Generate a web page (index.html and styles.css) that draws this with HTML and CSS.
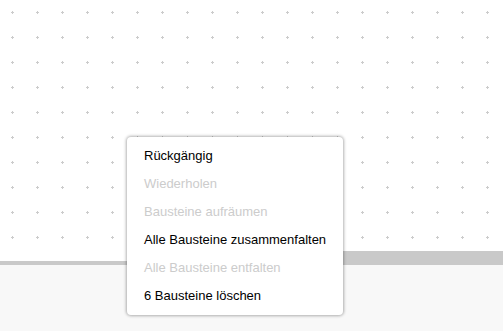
FILE: index.html
```html
<!DOCTYPE html>
<html lang="de">

<head>
    <meta charset="UTF-8">
    <meta name="viewport" content="width=device-width, initial-scale=1.0">
    <title>Blockly Arbeitsbereich</title>
    <link rel="stylesheet" href="styles.css">
</head>

<body>
    <div class="workspace">
        <svg class="workspace__grid" width="100%" height="251" xmlns="http://www.w3.org/2000/svg">
            <defs>
                <pattern id="gridPattern" width="25" height="25" patternUnits="userSpaceOnUse">
                    <line x1="11" y1="12.5" x2="14" y2="12.5" stroke="#ccc" stroke-width="1"></line>
                    <line x1="12.5" y1="11" x2="12.5" y2="14" stroke="#ccc" stroke-width="1"></line>
                </pattern>
            </defs>
            <rect width="100%" height="100%" fill="url(#gridPattern)"></rect>
        </svg>
        <div class="scrollbar">
            <div class="scrollbar__track"></div>
            <div class="scrollbar__handle"></div>
        </div>
    </div>

    <!-- Kontextmenü -->
    <ul class="context-menu">
        <li class="context-menu__item">Rückgängig</li>
        <li class="context-menu__item context-menu__item--disabled">Wiederholen</li>
        <li class="context-menu__item context-menu__item--disabled">Bausteine aufräumen</li>
        <li class="context-menu__item">Alle Bausteine zusammenfalten</li>
        <li class="context-menu__item context-menu__item--disabled">Alle Bausteine entfalten</li>
        <li class="context-menu__item">6 Bausteine löschen</li>
    </ul>
</body>

</html>
```

FILE: styles.css
```css
:root {
    --color-page-bg: #f8f8f8;
    --color-workspace-bg: #fff;
    --color-scrollbar: #c9c9c9;
    --color-text: #000;
    --color-disabled: #ccc;
}

body {
    margin: 0;
    background-color: var(--color-page-bg);
    font-family: 'Liberation Sans', Arial, sans-serif;
    overflow: hidden;
}

.workspace {
    background-color: var(--color-workspace-bg);
}

.workspace__grid {
    display: block;
}

.scrollbar {
    display: flex;
    align-items: flex-end;
    height: 14px;
}

.scrollbar__track {
    flex: 1;
    height: 4px;
    background-color: var(--color-scrollbar);
}

.scrollbar__handle {
    width: 300px;
    height: 14px;
    background-color: var(--color-scrollbar);
}

.context-menu {
    position: absolute;
    left: 127px;
    top: 137px;
    width: 216px;
    box-sizing: border-box;
    margin: 0;
    padding: 4px 0;
    list-style: none;
    background-color: #fff;
    border: 1px solid transparent;
    border-radius: 4px;
    box-shadow: 0 0 3px 1px rgba(0, 0, 0, 0.3);
    font-size: 13px;
    line-height: 16px;
}

.context-menu__item {
    padding: 6px 15px 6px 16px;
    color: var(--color-text);
    white-space: nowrap;
    cursor: pointer;
}

.context-menu__item--disabled {
    color: var(--color-disabled);
    cursor: default;
}
```
